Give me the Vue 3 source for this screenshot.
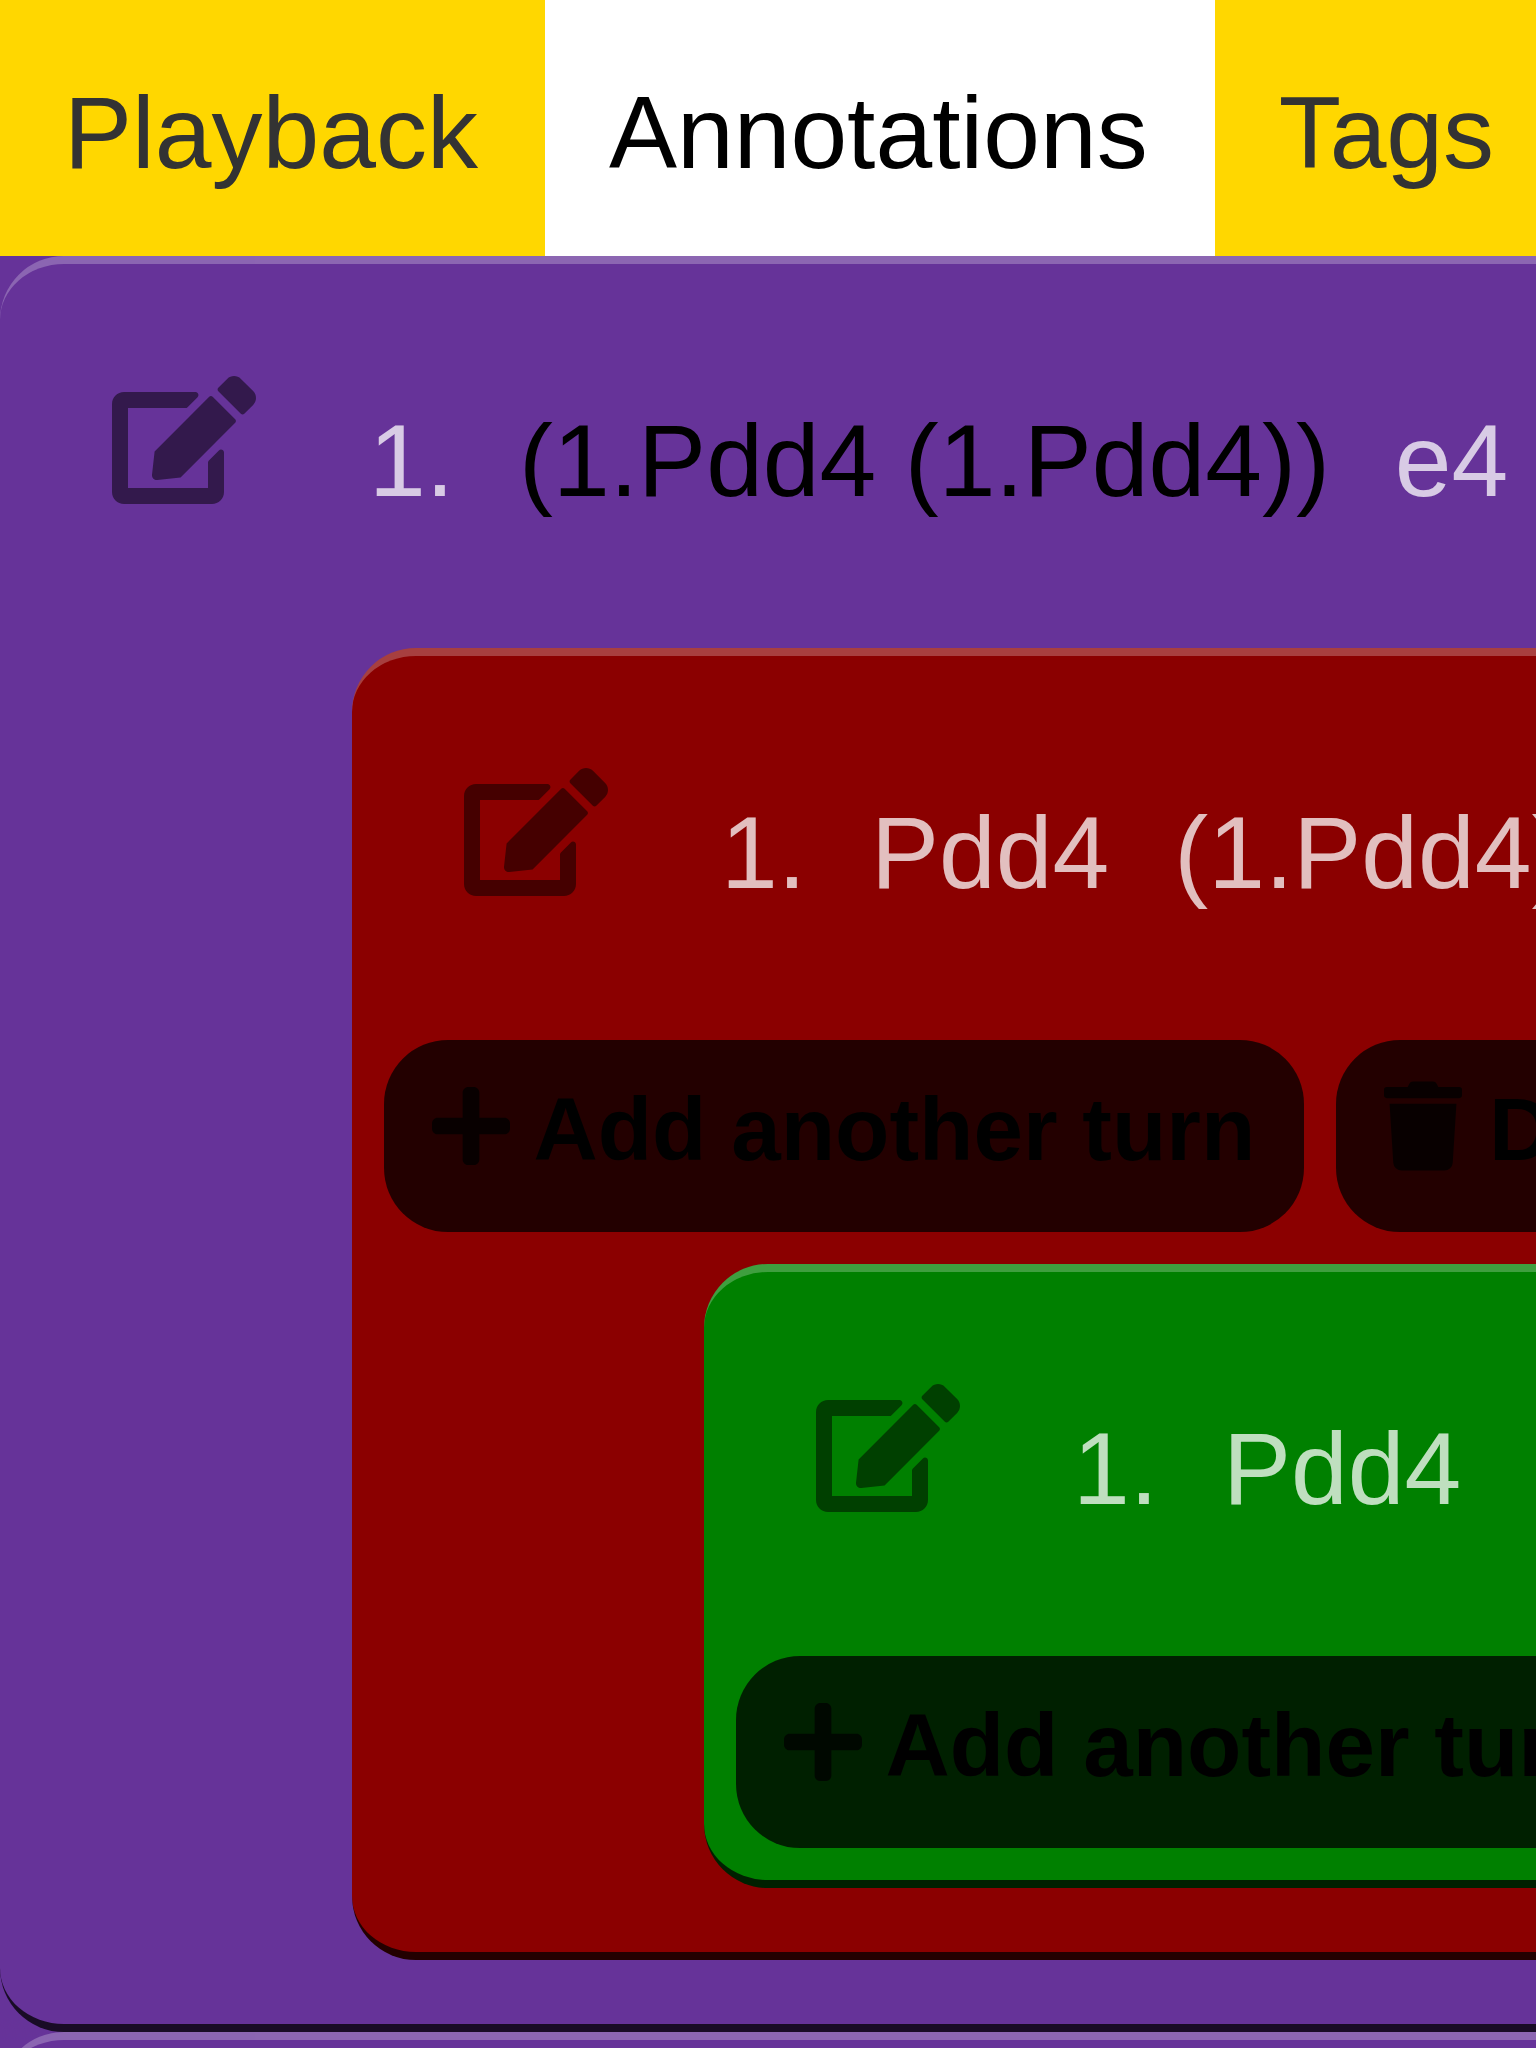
<script setup>
import { ref } from 'vue'

const tabs = ['Playback', 'Annotations', 'Tags']
const active = ref('Annotations')

const icons = {
  edit: 'M402.6 83.2l90.2 90.2c3.8 3.8 3.8 10 0 13.8L274.4 405.6l-92.8 10.3c-12.4 1.4-22.9-9.1-21.5-21.5l10.3-92.8L388.8 83.2c3.8-3.8 10-3.8 13.8 0zm162-22.9l-48.8-48.8c-15.2-15.2-39.9-15.2-55.2 0l-35.4 35.4c-3.8 3.8-3.8 10 0 13.8l90.2 90.2c3.8 3.8 10 3.8 13.8 0l35.4-35.4c15.2-15.3 15.2-40 0-55.2zM384 346.2V448H64V128h229.8c3.2 0 6.2-1.3 8.5-3.5l40-40c7.6-7.6 2.2-20.5-8.5-20.5H48C21.5 64 0 85.5 0 112v352c0 26.5 21.5 48 48 48h352c26.5 0 48-21.5 48-48V306.2c0-10.7-12.9-16-20.5-8.5l-40 40c-2.2 2.3-3.5 5.3-3.5 8.5z',
  plus: 'M416 208H272V64c0-17.67-14.33-32-32-32h-32c-17.67 0-32 14.33-32 32v144H32c-17.67 0-32 14.33-32 32v32c0 17.67 14.33 32 32 32h144v144c0 17.67 14.33 32 32 32h32c17.67 0 32-14.33 32-32V304h144c17.67 0 32-14.33 32-32v-32c0-17.67-14.33-32-32-32z',
  trash: 'M432 32H312l-9.4-18.7A24 24 0 0 0 281.1 0H166.8a23.72 23.72 0 0 0-21.4 13.3L136 32H16A16 16 0 0 0 0 48v32a16 16 0 0 0 16 16h416a16 16 0 0 0 16-16V48a16 16 0 0 0-16-16zM53.2 467a48 48 0 0 0 47.9 45h245.8a48 48 0 0 0 47.9-45L416 128H32z',
}
</script>

<template>
  <main class="app">
    <nav class="tabs">
      <button
        v-for="tab in tabs"
        :key="tab"
        type="button"
        class="tab"
        :class="{ active: tab === active }"
        @click="active = tab"
      >{{ tab }}</button>
    </nav>

    <ul class="turns">
      <li class="turn purple">
        <div class="moves">
          <button type="button" class="edit" aria-label="Edit turn">
            <svg viewBox="0 0 576 512" aria-hidden="true"><path :d="icons.edit" /></svg>
          </button>
          <span>1.</span>
          <span class="variation">(1.Pdd4 (1.Pdd4))</span>
          <span>e4</span>
        </div>
        <ul class="nested">
          <li class="turn red">
            <div class="moves">
              <button type="button" class="edit" aria-label="Edit turn">
                <svg viewBox="0 0 576 512" aria-hidden="true"><path :d="icons.edit" /></svg>
              </button>
              <span>1.</span>
              <span>Pdd4</span>
              <span>(1.Pdd4)</span>
            </div>
            <div class="actions">
              <button type="button" class="action">
                <svg viewBox="0 0 448 512" aria-hidden="true"><path :d="icons.plus" /></svg> Add another turn
              </button>
              <button type="button" class="action">
                <svg viewBox="0 0 448 512" aria-hidden="true"><path :d="icons.trash" /></svg> Delete
              </button>
            </div>
            <ul class="nested">
              <li class="turn green">
                <div class="moves">
                  <button type="button" class="edit" aria-label="Edit turn">
                    <svg viewBox="0 0 576 512" aria-hidden="true"><path :d="icons.edit" /></svg>
                  </button>
                  <span>1.</span>
                  <span>Pdd4</span>
                </div>
                <div class="actions">
                  <button type="button" class="action">
                    <svg viewBox="0 0 448 512" aria-hidden="true"><path :d="icons.plus" /></svg> Add another turn
                  </button>
                </div>
              </li>
            </ul>
          </li>
        </ul>
      </li>
      <li class="turn purple">
        <div class="moves"></div>
      </li>
    </ul>
  </main>
</template>

<style>
body {
  margin: 0;
  background: #663399;
}
</style>

<style scoped>
.app {
  height: 100vh;
  overflow: hidden;
  font-family: "Liberation Sans", Arial, sans-serif;
  font-size: 102px;
  line-height: 118px;
  white-space: nowrap;
  color: #000;
}

button {
  flex: none;
  margin: 0;
  border: 0;
  font: inherit;
  color: inherit;
  cursor: pointer;
}

svg {
  fill: currentColor;
}

.tabs {
  display: flex;
  background: #ffd700;
}

.tab {
  padding: 74px 67px 64px 64px;
  background: #ffd700;
  color: #333;
}

.tab.active {
  background: #fff;
  color: #000;
}

.turns,
.nested {
  margin: 0;
  padding: 0;
  list-style: none;
}

.nested {
  padding: 0 0 64px 352px;
}

.turn {
  border-top: 8px solid rgba(255, 255, 255, 0.25);
  border-bottom: 8px solid rgba(0, 0, 0, 0.75);
  border-radius: 64px 0 0 64px;
}

.purple {
  background-color: #663399;
}

.red {
  background-color: #8b0000;
}

.green {
  background-color: #008000;
}

.moves {
  display: flex;
  align-items: flex-start;
  gap: 65px;
  box-sizing: border-box;
  min-height: 384px;
  color: rgba(255, 255, 255, 0.75);
}

.moves span {
  padding-top: 138px;
}

.moves .variation {
  color: #000;
}

.edit {
  display: flex;
  padding: 112px 48px 112px 112px;
  background: none;
  color: rgba(0, 0, 0, 0.5);
}

.edit svg {
  width: 144px;
  height: 128px;
}

.actions {
  display: flex;
  gap: 32px;
  padding: 0 0 32px 32px;
}

.action {
  padding: 37px 49px 51px 48px;
  border-radius: 64px;
  background: rgba(0, 0, 0, 0.75);
  font-size: 89px;
  font-weight: bold;
  line-height: 104px;
}

.action svg {
  width: 78px;
  height: 90px;
  margin-right: 2px;
  vertical-align: -11px;
  opacity: 0.75;
}
</style>
